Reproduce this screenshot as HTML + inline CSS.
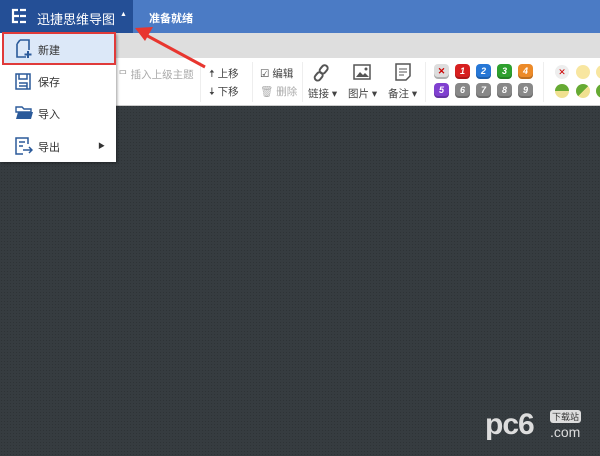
<!DOCTYPE html>
<html><head><meta charset="utf-8"><style>
*{margin:0;padding:0;box-sizing:border-box}
body{width:600px;height:456px;overflow:hidden;position:relative;font-family:"Liberation Sans","Noto Sans CJK SC",sans-serif;background:#363c40;
background-image:radial-gradient(#2e3336 0.6px,transparent 0.8px);background-size:3px 3px}
.abs{position:absolute}
#top{left:0;top:0;width:600px;height:33px;background:#4b7bc5}
#brand{left:0;top:0;width:133px;height:33px;background:#244f96;color:#fff;font-size:13px}
#strip{left:0;top:33px;width:600px;height:25px;background:#dedede}
#tb{left:0;top:58px;width:600px;height:48px;background:#fff;border-bottom:1px solid #ccc}
.t{font-size:10.5px;color:#444;white-space:nowrap}
.g{color:#aaa}
.b{width:15px;height:15px;border-radius:4px;color:#fff;font-size:9px;font-style:italic;font-weight:bold;text-align:center;line-height:15px;box-shadow:inset 0 -2px 0 rgba(0,0,0,.2)}
.c{width:14px;height:14px;border-radius:50%}
#menu{left:0;top:33px;width:116px;height:129px;background:#fff;box-shadow:1px 1px 3px rgba(0,0,0,.4)}
.mi{position:absolute;left:38px;font-size:11px;color:#333}
.sep{width:1px;height:40px;background:#eee}
</style></head><body>
<div id="top" class="abs"></div>
<div id="brand" class="abs">
<svg class="abs" style="left:10px;top:8px" width="18" height="16" viewBox="0 0 18 16" fill="none" stroke="#fff" stroke-width="2.2"><path d="M8 2H3v12h5M3 8h6M10 2h6M10 8h6M10 14h6"/></svg>
<span class="abs" style="left:37px;top:9px">迅捷思维导图</span>
<span class="abs" style="left:120px;top:11px;font-size:7px">▲</span>
</div>
<span class="abs" style="left:149px;top:10px;color:#fff;font-size:11px;font-weight:bold">准备就绪</span>
<div id="strip" class="abs"></div>
<div id="tb" class="abs">
<span class="abs t g" style="left:118px;top:9px">ᄆ 插入上级主题</span>
<div class="abs sep" style="left:200px;top:4px"></div>
<span class="abs t" style="left:209px;top:8px">🠅 上移</span>
<span class="abs t" style="left:209px;top:26px">🠇 下移</span>
<div class="abs sep" style="left:252px;top:4px"></div>
<span class="abs t" style="left:260px;top:8px">☑ 编辑</span>
<span class="abs t g" style="left:260px;top:26px">🗑 删除</span>
<div class="abs sep" style="left:302px;top:4px"></div>
<svg class="abs" style="left:313px;top:6px" width="18" height="18" viewBox="0 0 18 18" fill="none" stroke="#555" stroke-width="2"><rect x="8" y="1" width="6" height="9" rx="3" transform="rotate(40 11 5)"/><rect x="3" y="8" width="6" height="9" rx="3" transform="rotate(40 6 12)"/></svg>
<span class="abs t" style="left:308px;top:28px">链接 ▾</span>
<svg class="abs" style="left:353px;top:6px" width="18" height="16"><rect x="1" y="1" width="16" height="14" fill="none" stroke="#555" stroke-width="1.5"/><path d="M3 13l4-5 3 3 2-2 4 4z" fill="#555"/><circle cx="13" cy="5" r="1.5" fill="#555"/></svg>
<span class="abs t" style="left:348px;top:28px">图片 ▾</span>
<svg class="abs" style="left:395px;top:5px" width="16" height="18"><path d="M1 1h14v12l-4 4H1z" fill="none" stroke="#555" stroke-width="1.5"/><path d="M4 6h8M4 9h8M4 12h5" stroke="#555"/></svg>
<span class="abs t" style="left:388px;top:28px">备注 ▾</span>
<div class="abs sep" style="left:425px;top:4px"></div>
<div class="abs b" style="left:434px;top:6px;background:#ddd;color:#c00;font-style:normal">✕</div>
<div class="abs b" style="left:455px;top:6px;background:#d71f1f">1</div>
<div class="abs b" style="left:476px;top:6px;background:#2677d6">2</div>
<div class="abs b" style="left:497px;top:6px;background:#2ea02e">3</div>
<div class="abs b" style="left:518px;top:6px;background:#ec8a28">4</div>
<div class="abs b" style="left:434px;top:25px;background:#8040d0">5</div>
<div class="abs b" style="left:455px;top:25px;background:#888">6</div>
<div class="abs b" style="left:476px;top:25px;background:#888">7</div>
<div class="abs b" style="left:497px;top:25px;background:#888">8</div>
<div class="abs b" style="left:518px;top:25px;background:#888">9</div>
<div class="abs sep" style="left:543px;top:4px"></div>
<div class="abs c" style="left:555px;top:7px;background:#eee;color:#c00;font-size:9px;text-align:center;line-height:14px">✕</div>
<div class="abs c" style="left:576px;top:7px;background:#f8e6a0"></div>
<div class="abs c" style="left:596px;top:7px;background:#f8e6a0"></div>
<div class="abs c" style="left:555px;top:26px;background:linear-gradient(#6a3 50%,#f0e090 50%)"></div>
<div class="abs c" style="left:576px;top:26px;background:linear-gradient(135deg,#6a3 50%,#f0e090 50%)"></div>
<div class="abs c" style="left:596px;top:26px;background:#6a3"></div>
</div>
<div id="menu" class="abs">
<div class="abs" style="left:2px;top:-1px;width:114px;height:33px;background:#dce8f8;border:2px solid #e03a3a"></div>
<svg class="abs" style="left:14px;top:6px" width="18" height="20" fill="none" stroke="#2b5a9a" stroke-width="1.6"><path d="M6 1h9v10M3 5v13h9M3 5l3-4"/><path d="M14 12v7M10.5 15.5h7" stroke-width="2"/></svg>
<span class="mi" style="top:9px">新建</span>
<svg class="abs" style="left:15px;top:40px" width="16" height="17" fill="none" stroke="#2b5a9a" stroke-width="1.5"><rect x="1" y="1" width="14" height="15"/><path d="M4 1v5h8V1M4 10h8v6M4 13h8"/></svg>
<span class="mi" style="top:41px">保存</span>
<svg class="abs" style="left:15px;top:73px" width="18" height="14"><path d="M1 1h6l2 2h7v3H1z" fill="none" stroke="#2b5a9a" stroke-width="1.4"/><path d="M1 13l2-7h15l-2 7z" fill="#2b5a9a"/></svg>
<span class="mi" style="top:73px">导入</span>
<svg class="abs" style="left:15px;top:104px" width="18" height="18" fill="none" stroke="#2b5a9a" stroke-width="1.5"><path d="M13 7V1H1v16h7M4 5h6M4 9h4"/><path d="M8 13h9M14 10l3 3-3 3"/></svg>
<span class="mi" style="top:106px">导出</span>
<span class="abs" style="left:98px;top:108px;font-size:7px;color:#333">▶</span>
</div>
<svg class="abs" style="left:130px;top:22px" width="80" height="50"><path d="M75 45L14 12" stroke="#e8362f" stroke-width="3"/><path d="M5 6l18-1-8 14z" fill="#e8362f"/></svg>
<div class="abs" style="left:485px;top:408px;color:#ddd;font-size:30px;font-weight:bold;letter-spacing:-1px">pc6</div>
<div class="abs" style="left:550px;top:410px;background:#ddd;color:#333;font-size:9px;padding:0 2px;border-radius:3px">下载站</div>
<div class="abs" style="left:550px;top:424px;color:#ddd;font-size:14px">.com</div>
</body></html>
